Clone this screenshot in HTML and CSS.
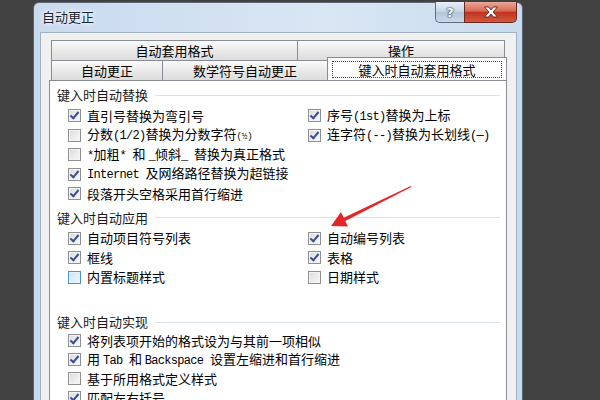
FILE: index.html
```html
<!DOCTYPE html>
<html lang="zh-CN">
<head>
    <meta charset="UTF-8">
    <title>自动更正</title>
    <link rel="stylesheet" href="styles.css">
</head>
<body>
    <div class="window">
        <div class="titlebar">
            <span class="title">自动更正</span>
            <div class="caption-btns">
                <div class="cap-btn help">?</div>
                <div class="cap-btn close">
                    <svg width="16" height="12" viewBox="0 0 16 12"><path d="M1.5 1 H5.5 L8 4 L10.5 1 H14.5 L10 6 L14.5 11 H10.5 L8 8 L5.5 11 H1.5 L6 6 Z" fill="#fff" stroke="#5a1f18" stroke-width="0.9"/></svg>
                </div>
            </div>
        </div>

        <div class="client">
            <div class="tabs">
                <div class="tab-row">
                    <div class="tab w-format">自动套用格式</div>
                    <div class="tab w-action">操作</div>
                </div>
                <div class="tab-row">
                    <div class="tab w-auto">自动更正</div>
                    <div class="tab w-math">数学符号自动更正</div>
                    <div class="tab active"><span class="focus">键入时自动套用格式</span></div>
                </div>
            </div>

            <div class="panel">
                <div class="group">
                    <div class="group-head">键入时自动替换</div>
                    <div class="opts">
                        <label class="opt"><span class="cb on"></span><span class="txt">直引号替换为弯引号</span></label>
                        <label class="opt"><span class="cb on"></span><span class="txt">序号<span class="lat">(1st)</span>替换为上标</span></label>
                        <label class="opt"><span class="cb"></span><span class="txt">分数<span class="lat">(1/2)</span>替换为分数字符<span class="lat small">(½)</span></span></label>
                        <label class="opt"><span class="cb on"></span><span class="txt">连字符<span class="lat">(--)</span>替换为长划线<span class="lat">(—)</span></span></label>
                        <label class="opt wide"><span class="cb"></span><span class="txt"><span class="lat">*</span>加粗<span class="lat">* </span>和 <span class="lat">_</span>倾斜<span class="lat">_ </span>替换为真正格式</span></label>
                        <label class="opt wide"><span class="cb on"></span><span class="txt"><span class="lat">Internet </span>及网络路径替换为超链接</span></label>
                        <label class="opt wide"><span class="cb on"></span><span class="txt">段落开头空格采用首行缩进</span></label>
                    </div>
                </div>

                <div class="group g2">
                    <div class="group-head">键入时自动应用</div>
                    <div class="opts">
                        <label class="opt"><span class="cb on"></span><span class="txt">自动项目符号列表</span></label>
                        <label class="opt"><span class="cb on"></span><span class="txt">自动编号列表</span></label>
                        <label class="opt"><span class="cb on"></span><span class="txt">框线</span></label>
                        <label class="opt"><span class="cb on"></span><span class="txt">表格</span></label>
                        <label class="opt"><span class="cb hover"></span><span class="txt">内置标题样式</span></label>
                        <label class="opt"><span class="cb"></span><span class="txt">日期样式</span></label>
                    </div>
                </div>

                <div class="group g3">
                    <div class="group-head">键入时自动实现</div>
                    <div class="opts">
                        <label class="opt wide"><span class="cb on"></span><span class="txt">将列表项开始的格式设为与其前一项相似</span></label>
                        <label class="opt wide"><span class="cb on"></span><span class="txt">用 <span class="lat">Tab </span>和 <span class="lat">Backspace </span>设置左缩进和首行缩进</span></label>
                        <label class="opt wide"><span class="cb"></span><span class="txt">基于所用格式定义样式</span></label>
                        <label class="opt wide"><span class="cb on"></span><span class="txt">匹配左右括号</span></label>
                    </div>
                </div>
            </div>
        </div>
    </div>

    <svg class="arrow" width="600" height="400" viewBox="0 0 600 400">
        <polygon points="331,226 341,212 343.7,217.8 410.7,185.9 411.3,187 345.3,221 348,226.6" fill="#e4262b"/>
    </svg>
</body>
</html>
```

FILE: styles.css
```css
* {
    box-sizing: border-box;
}

body {
    margin: 0;
    background: #414141;
    font-family: "Noto Sans CJK SC", "Noto Sans", sans-serif;
    font-size: 13px;
    color: #000;
    overflow: hidden;
    height: 400px;
    position: relative;
}

.window {
    margin: 2px 0 0 33px;
    width: 490px;
    height: 420px;
    border: 1px solid #5d6876;
    border-radius: 6px 6px 0 0;
    background: linear-gradient(90deg, #c9daee 0%, #d9e6f4 60%, #c8dbef 100%);
    padding: 0 5px 0 6px;
    display: flex;
    flex-direction: column;
}

.titlebar {
    height: 29px;
    display: flex;
    justify-content: space-between;
    align-items: flex-start;
}

.title {
    margin: 6px 0 0 2px;
    line-height: 16px;
    color: #1d2530;
    text-shadow: 0 0 6px #fff, 0 0 3px #fff;
}

.caption-btns {
    display: flex;
    margin-top: -1px;
}

.cap-btn {
    height: 21px;
    border: 1px solid #5f6d80;
    border-top: none;
    display: flex;
    align-items: center;
    justify-content: center;
}

.cap-btn.help {
    width: 29px;
    border-right: none;
    border-radius: 0 0 0 5px;
    background: linear-gradient(#e8eff7, #c6d4e4 50%, #b3c5db 51%, #cbd9e8);
    color: #fff;
    font-family: "DejaVu Sans", sans-serif;
    font-weight: bold;
    font-size: 13px;
    text-shadow: 0 0 1px #39465a, 0 0 1px #39465a, 0 0 2px #39465a;
}

.cap-btn.close {
    width: 53px;
    border-color: #6e271e;
    border-radius: 0 0 5px 0;
    background: linear-gradient(#e9a899, #d86a55 45%, #c2341e 52%, #d3573e);
}

.client {
    flex: 1;
    background: #f0f0f0;
    border: 1px solid #9eb1c7;
    padding: 7px 9px 0 8px;
}

.tabs {
    margin: 0 2px;
}

.tab-row {
    display: flex;
    height: 20px;
}

.tab {
    border: 1px solid #898c95;
    border-bottom: none;
    margin-left: -1px;
    background: linear-gradient(#fbfbfb, #eaeaea 50%, #dcdcdc);
    display: flex;
    align-items: center;
    justify-content: center;
    line-height: 16px;
}

.tab:first-child {
    margin-left: 0;
}

.w-format { width: 247px; }
.w-action { flex: 1; }
.w-auto { width: 112px; }
.w-math { width: 166px; }

.tab.active {
    flex: 1;
    background: #fff;
    height: 23px;
    margin: -3px -2px -1px -1px;
    position: relative;
    z-index: 1;
    padding: 3px 4px 0;
    align-items: flex-start;
}

.focus {
    flex: 1;
    text-align: center;
    border: 1px dotted #444;
    line-height: 15px;
}

.panel {
    background: #fff;
    border: 1px solid #898c95;
    height: 340px;
    padding: 6px 6px 0 7px;
}

.group-head {
    display: flex;
    align-items: center;
    height: 16px;
    line-height: 16px;
    color: #1a1a1a;
}

.group-head::after {
    content: "";
    flex: 1;
    height: 1px;
    background: #dbe3ee;
    margin-left: 7px;
}

.opts {
    display: grid;
    grid-template-columns: 240px 1fr;
    margin: 3px 0 0 11px;
}

.g2 { margin-top: 6px; }
.g3 { margin-top: 27px; }
.g3 .opts { margin-top: 1px; }
.g3 .opt { height: 19px; }

.opt {
    display: flex;
    align-items: center;
    height: 19.5px;
    white-space: nowrap;
}

.opt.wide {
    grid-column: 1 / 3;
}

.txt {
    line-height: 16px;
}

.cb {
    width: 13px;
    height: 13px;
    border: 1px solid #8f8f8f;
    background: linear-gradient(135deg, #dcdcdc, #f8f8f8);
    box-shadow: inset 0 0 0 1px #f4f4f4;
    margin-right: 6px;
    flex: none;
    position: relative;
}

.cb.on::after {
    content: "";
    position: absolute;
    left: 3px;
    top: 0;
    width: 3px;
    height: 7px;
    border: solid #3a4f93;
    border-width: 0 2px 2px 0;
    transform: rotate(40deg);
}

.cb.hover {
    border-color: #4d92c8;
    background: linear-gradient(135deg, #c9e6f8, #eef8fe);
    box-shadow: inset 0 0 0 1px #e4f3fd;
}

.lat {
    font-family: "Liberation Mono", monospace;
    font-size: 12px;
    letter-spacing: -0.7px;
    white-space: pre;
}

.lat.small {
    font-size: 9px;
    letter-spacing: 0;
}

.arrow {
    position: absolute;
    left: 0;
    top: 0;
    pointer-events: none;
}
```
